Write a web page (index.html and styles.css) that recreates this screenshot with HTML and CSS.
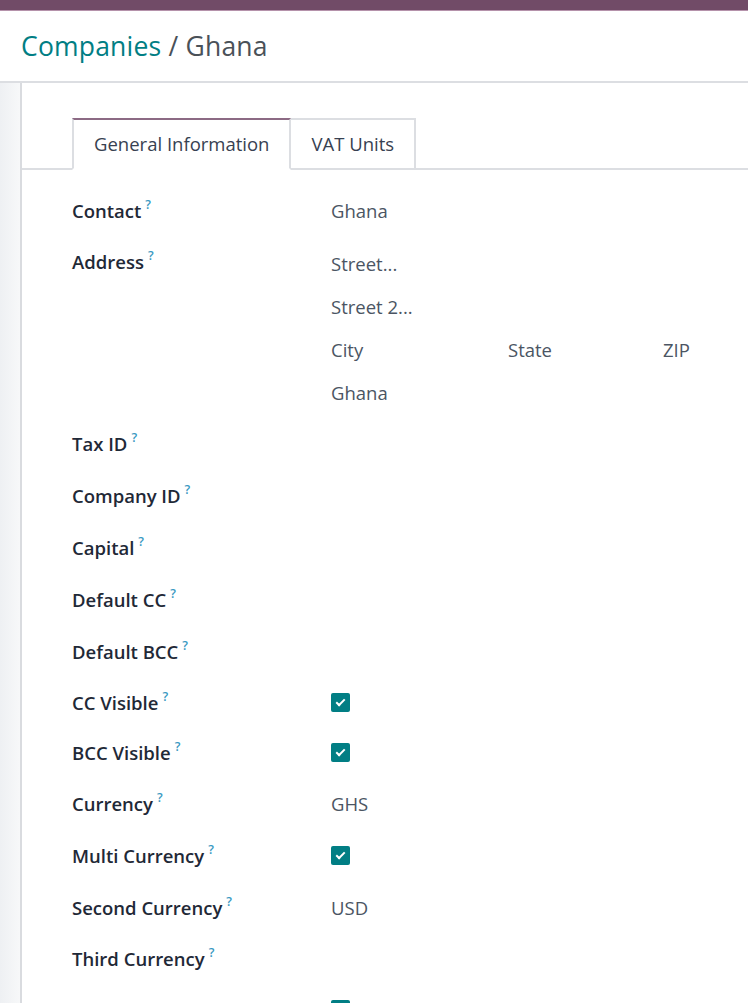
FILE: index.html
```html
<!DOCTYPE html>
<html lang="en">
<head>
  <meta charset="UTF-8">
  <meta name="viewport" content="width=device-width, initial-scale=1.0">
  <title>Companies / Ghana</title>
  <link rel="stylesheet" href="styles.css">
</head>
<body>
  <div class="topbar"></div>
  <div class="control-panel">
    <div class="breadcrumb"><a href="#">Companies</a> <span class="sep">/</span> Ghana</div>
  </div>
  <div class="content">
    <div class="gutter"></div>
    <div class="sheet">
      <div class="tabs">
        <div class="tab active">General Information</div>
        <div class="tab">VAT Units</div>
      </div>
      <div class="form">
        <div class="row">
          <div class="label">Contact<sup>?</sup></div>
          <div class="value">Ghana</div>
        </div>
        <div class="row address">
          <div class="label">Address<sup>?</sup></div>
          <div class="value">
            <div class="line">Street...</div>
            <div class="line">Street 2...</div>
            <div class="line city">
              <span>City</span>
              <span>State</span>
              <span>ZIP</span>
            </div>
            <div class="line">Ghana</div>
          </div>
        </div>
        <div class="row">
          <div class="label">Tax ID<sup>?</sup></div>
          <div class="value"></div>
        </div>
        <div class="row">
          <div class="label">Company ID<sup>?</sup></div>
          <div class="value"></div>
        </div>
        <div class="row">
          <div class="label">Capital<sup>?</sup></div>
          <div class="value"></div>
        </div>
        <div class="row">
          <div class="label">Default CC<sup>?</sup></div>
          <div class="value"></div>
        </div>
        <div class="row">
          <div class="label">Default BCC<sup>?</sup></div>
          <div class="value"></div>
        </div>
        <div class="row short">
          <div class="label">CC Visible<sup>?</sup></div>
          <div class="value"><span class="check"></span></div>
        </div>
        <div class="row short">
          <div class="label">BCC Visible<sup>?</sup></div>
          <div class="value"><span class="check"></span></div>
        </div>
        <div class="row">
          <div class="label">Currency<sup>?</sup></div>
          <div class="value">GHS</div>
        </div>
        <div class="row">
          <div class="label">Multi Currency<sup>?</sup></div>
          <div class="value"><span class="check"></span></div>
        </div>
        <div class="row">
          <div class="label">Second Currency<sup>?</sup></div>
          <div class="value">USD</div>
        </div>
        <div class="row short">
          <div class="label">Third Currency<sup>?</sup></div>
          <div class="value"></div>
        </div>
        <div class="row">
          <div class="label"></div>
          <div class="value"><span class="check"></span></div>
        </div>
      </div>
    </div>
  </div>
</body>
</html>
```
FILE: styles.css
```css
body {
  margin: 0;
  font-family: 'Open Sans', 'Noto Sans', sans-serif;
  color: #374151;
  background: #fff;
  overflow: hidden;
}
.topbar {
  height: 10px;
  background: #714b67;
  border-bottom: 1px solid #b592ab;
}
.control-panel {
  height: 70px;
  padding-left: 21px;
  display: flex;
  align-items: center;
  border-bottom: 2px solid #dcdee2;
}
.breadcrumb {
  font-size: 26.5px;
  color: #4a5158;
  letter-spacing: 0.2px;
}
.breadcrumb a {
  color: #017e84;
  text-decoration: none;
}
.content {
  display: flex;
}
.gutter {
  width: 20px;
  background: linear-gradient(90deg, #eef0f3, #f7f8f9);
}
.sheet {
  flex: 1;
  border-left: 2px solid #d9dbdf;
  padding-top: 35px;
}
.tabs {
  display: flex;
  padding-left: 50px;
  border-bottom: 2px solid #dcdee2;
}
.tab {
  height: 48px;
  line-height: 48px;
  padding: 0 20px;
  font-size: 18.5px;
  color: #374151;
  border: 2px solid #dcdee2;
  border-bottom: none;
  margin-bottom: -2px;
  background: #fff;
}
.tab.active {
  border-top-color: #8c6a84;
  border-bottom: 2px solid #fff;
}
.tab + .tab {
  border-left: none;
}
.form {
  padding-left: 50px;
  padding-top: 14px;
}
.row {
  display: grid;
  grid-template-columns: 259px 1fr;
  height: 52px;
  align-items: center;
}
.row.short {
  height: 50px;
}
.label {
  font-size: 18.5px;
  font-weight: 600;
  color: #1f2937;
}
.label sup {
  font-size: 12.5px;
  font-weight: 600;
  color: #3a99c2;
  margin-left: 4px;
  vertical-align: 9px;
  line-height: 0;
}
.value {
  font-size: 18.5px;
  color: #4b5563;
}
.row.address {
  height: 181px;
  align-items: start;
}
.row.address .label {
  line-height: 52px;
}
.address .value {
  padding-top: 6px;
}
.line {
  height: 43px;
  line-height: 43px;
}
.city {
  display: grid;
  grid-template-columns: 177px 155px 1fr;
}
.check {
  display: block;
  width: 19px;
  height: 19px;
  background: #017e84;
  border-radius: 2px;
  position: relative;
}
.check::after {
  content: "";
  position: absolute;
  left: 7px;
  top: 4px;
  width: 3px;
  height: 7px;
  border: solid #fff;
  border-width: 0 2px 2px 0;
  transform: rotate(45deg);
}
```
